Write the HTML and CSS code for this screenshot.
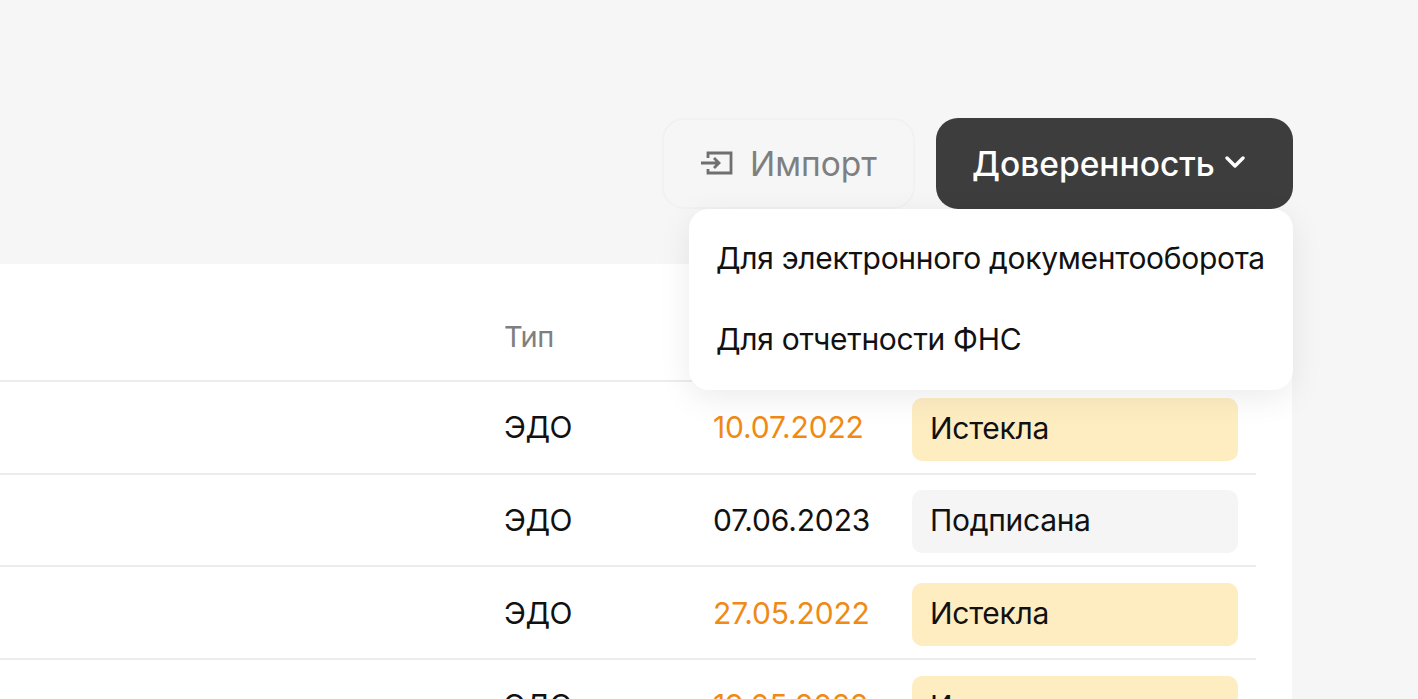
FILE: index.html
```html
<!DOCTYPE html>
<html lang="ru">
<head>
  <meta charset="UTF-8" />
  <meta name="viewport" content="width=device-width, initial-scale=1.0"/>
  <title>Доверенности</title>
  <link rel="stylesheet" href="styles.css">
</head>
<body>

  <div class="toolbar">
    <button class="btn-import">
      <svg class="icon-import" viewBox="0 0 34 24" fill="none" stroke="#6f6f6f" stroke-width="2.8">
        <path d="M9 7V2H32V22H9V18"/>
        <path d="M2 12H20M15 7l5 5-5 5"/>
      </svg>
      Импорт
    </button>
    <div class="menu-wrap">
      <button class="btn-dark">
        Доверенность
        <svg class="icon-chevron" viewBox="0 0 20 12" fill="none" stroke="#fff" stroke-width="3.4" stroke-linecap="round" stroke-linejoin="round">
          <path d="M2 2l8 8 8-8"/>
        </svg>
      </button>
      <div class="menu">
        <div class="menu-item">Для электронного документооборота</div>
        <div class="menu-item">Для отчетности ФНС</div>
      </div>
    </div>
  </div>

  <div class="card">
    <div class="row head">
      <div class="col-type">Тип</div>
    </div>
    <div class="row">
      <div class="col-type">ЭДО</div>
      <div class="col-date expired">10.07.2022</div>
      <div class="status status-expired">Истекла</div>
    </div>
    <div class="row">
      <div class="col-type">ЭДО</div>
      <div class="col-date">07.06.2023</div>
      <div class="status">Подписана</div>
    </div>
    <div class="row">
      <div class="col-type">ЭДО</div>
      <div class="col-date expired">27.05.2022</div>
      <div class="status status-expired">Истекла</div>
    </div>
    <div class="row">
      <div class="col-type">ЭДО</div>
      <div class="col-date expired">19.05.2022</div>
      <div class="status status-expired">Истекла</div>
    </div>
  </div>

</body>
</html>
```

FILE: styles.css
```css
html, body {
  height: 699px;
  overflow: hidden;
}

body {
  margin: 0;
  background-color: #f6f6f6;
  color: #111;
  font-family: Inter, "Noto Sans", sans-serif;
  font-size: 30px;
}

.toolbar {
  display: flex;
  justify-content: flex-end;
  gap: 21px;
  padding: 118px 125px 55px 0;
}

button {
  font-family: inherit;
  height: 91px;
  border-radius: 22px;
  display: flex;
  align-items: center;
  box-sizing: border-box;
  padding-top: 2px;
}

.btn-import {
  width: 253px;
  padding-left: 35px;
  gap: 17px;
  font-size: 33.5px;
  color: #7f7f7f;
  background-color: #f6f6f6;
  border: 2px solid #f1f1f1;
}

.icon-import {
  width: 34px;
  height: 24px;
  margin-bottom: 2px;
}

.menu-wrap {
  position: relative;
}

.btn-dark {
  width: 357px;
  padding-left: 36px;
  gap: 10px;
  font-size: 33.5px;
  font-weight: 500;
  color: #fff;
  background-color: #3d3d3d;
  border: none;
}

.icon-chevron {
  width: 20px;
  height: 12px;
  margin-bottom: 4px;
}

.menu {
  position: absolute;
  top: 91px;
  right: 0;
  width: 604px;
  box-sizing: border-box;
  padding: 8px 0 11px 27px;
  background-color: #fff;
  border-radius: 20px;
  box-shadow: 0 8px 32px rgba(0, 0, 0, 0.08);
}

.menu-item {
  height: 81px;
  display: flex;
  align-items: center;
  white-space: nowrap;
  letter-spacing: -0.3px;
}

.card {
  margin-right: 126px;
  padding-right: 36px;
  background-color: #fff;
  border-top-right-radius: 20px;
  height: 435px;
}

.row {
  display: flex;
  align-items: center;
  height: 90.67px;
  padding-left: 504px;
  border-bottom: 2px solid #ececec;
}

.row.head {
  height: 88px;
  padding-top: 28px;
  color: #7f7f7f;
}

.row.head .col-type {
  font-size: 29px;
}

.col-type {
  width: 209px;
  letter-spacing: -0.5px;
}

.col-date {
  width: 199px;
  letter-spacing: -0.15px;
}

.expired {
  color: #f08a14;
}

.status {
  width: 326px;
  height: 63px;
  margin-top: 4px;
  box-sizing: border-box;
  padding: 0 0 3px 18px;
  display: flex;
  align-items: center;
  background-color: #f5f5f5;
  border-radius: 10px;
  letter-spacing: -0.3px;
}

.status-expired {
  background-color: #ffedc2;
}
```
